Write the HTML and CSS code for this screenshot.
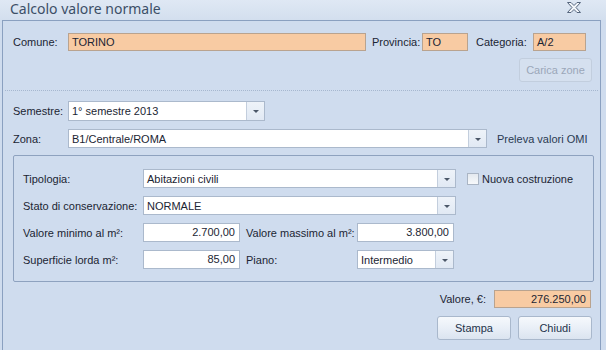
FILE: index.html
```html
<!DOCTYPE html>
<html lang="it">
<head>
  <meta charset="UTF-8">
  <title>Calcolo valore normale</title>
  <link rel="stylesheet" href="styles.css">
</head>
<body>

  <div class="titlebar">
    <span class="titolo">Calcolo valore normale</span>
    <span class="chiudi-x">
      <svg width="14" height="11" viewBox="0 0 14 11">
        <polygon points="0.5,0.5 4,0.5 7,3.5 10,0.5 13.5,0.5 9,5.5 13.5,10.5 10,10.5 7,7.5 4,10.5 0.5,10.5 5,5.5" fill="#f3f6fa" stroke="#56667e" stroke-width="1" stroke-linejoin="round"/>
      </svg>
    </span>
  </div>

  <div class="frame">
    <div class="riga">
      <label class="lbl-comune">Comune:</label>
      <div class="campo arancio w-comune">TORINO</div>
      <label class="lbl-prov">Provincia:</label>
      <div class="campo arancio w-prov">TO</div>
      <label class="lbl-cat">Categoria:</label>
      <div class="campo arancio w-cat">A/2</div>
    </div>

    <div class="riga destra riga-carica">
      <button class="btn disabilitato">Carica zone</button>
    </div>

    <div class="separatore"></div>

    <div class="riga riga-semestre">
      <label class="lbl-comune">Semestre:</label>
      <div class="combo w-semestre alta">
        <span class="testo">1° semestre 2013</span>
        <span class="freccia"></span>
      </div>
    </div>

    <div class="riga riga-zona">
      <label class="lbl-comune">Zona:</label>
      <div class="combo w-zona">
        <span class="testo">B1/Centrale/ROMA</span>
        <span class="freccia"></span>
      </div>
      <span class="link-omi">Preleva valori OMI</span>
    </div>

    <div class="gruppo">
      <div class="riga">
        <label class="lbl-g">Tipologia:</label>
        <div class="combo w-tipo">
          <span class="testo">Abitazioni civili</span>
          <span class="freccia"></span>
        </div>
        <span class="check"></span>
        <span class="check-testo">Nuova costruzione</span>
      </div>
      <div class="riga">
        <label class="lbl-g">Stato di conservazione:</label>
        <div class="combo w-tipo">
          <span class="testo">NORMALE</span>
          <span class="freccia"></span>
        </div>
      </div>
      <div class="riga">
        <label class="lbl-g">Valore minimo al m²:</label>
        <div class="campo num w-val">2.700,00</div>
        <label class="lbl-g2">Valore massimo al m²:</label>
        <div class="campo num w-val">3.800,00</div>
      </div>
      <div class="riga">
        <label class="lbl-g">Superficie lorda m²:</label>
        <div class="campo num w-val">85,00</div>
        <label class="lbl-g2">Piano:</label>
        <div class="combo w-val">
          <span class="testo">Intermedio</span>
          <span class="freccia"></span>
        </div>
      </div>
    </div>

    <div class="riga destra riga-valore">
      <label class="lbl-valore">Valore, €:</label>
      <div class="campo arancio num w-val">276.250,00</div>
    </div>

    <div class="riga destra riga-bottoni">
      <button class="btn">Stampa</button>
      <button class="btn">Chiudi</button>
    </div>
  </div>

</body>
</html>
```

FILE: styles.css
```css
body {
  margin: 0;
  background-color: #cfdcee;
  font-family: 'Liberation Sans', Arial, sans-serif;
  font-size: 11px;
  color: #1b2533;
  overflow: hidden;
}

.titlebar {
  height: 20px;
  display: flex;
  align-items: flex-start;
  justify-content: space-between;
  padding: 0 25px 0 10px;
  background: linear-gradient(#dfe8f4, #d3dfee);
}

.titolo {
  font-family: 'Noto Sans', 'Open Sans', sans-serif;
  font-size: 14px;
  color: #3c4f67;
  line-height: 18px;
}

.chiudi-x {
  display: flex;
  margin-top: 2px;
}

.frame {
  margin: 0 5px 0 2px;
  height: 330px;
  border: 1px solid #8aa0c0;
  border-bottom: none;
  padding: 12px 6px 0 10px;
  box-sizing: border-box;
}

.riga {
  display: flex;
  align-items: center;
}

.destra {
  justify-content: flex-end;
}

label {
  white-space: nowrap;
}

.lbl-comune { width: 55px; }
.lbl-prov { margin-left: 6px; width: 50px; }
.lbl-cat { margin-left: 8px; width: 57px; }

.campo {
  height: 18px;
  box-sizing: border-box;
  border: 1px solid #abb9cc;
  background-color: #fff;
  padding: 0 4px;
  line-height: 16px;
  white-space: nowrap;
}

.arancio {
  background-color: #f8cba3;
  border-color: #b9a38f;
  padding-left: 3px;
}

.num {
  text-align: right;
}

.w-comune { width: 298px; }
.w-prov { width: 46px; }
.w-cat { width: 53px; }
.w-semestre { width: 197px; }
.w-zona { width: 419px; }
.w-tipo { width: 313px; }
.w-val { width: 97px; }

.combo {
  height: 19px;
  box-sizing: border-box;
  border: 1px solid #abb9cc;
  background-color: #fff;
  display: flex;
  align-items: stretch;
}

.combo.alta {
  height: 20px;
}

.combo .testo {
  flex: 1;
  padding-left: 3px;
  display: flex;
  align-items: center;
  white-space: nowrap;
}

.combo .freccia {
  width: 17px;
  border-left: 1px solid #c3cedd;
  background: linear-gradient(#eef3f9, #e1e9f4);
  position: relative;
}

.combo .freccia::after {
  content: "";
  position: absolute;
  left: 6px;
  top: 50%;
  margin-top: -1px;
  border-left: 3px solid transparent;
  border-right: 3px solid transparent;
  border-top: 3px solid #4b5768;
}

.riga-carica {
  margin-top: 7px;
  padding-right: 2px;
}

.btn {
  width: 74px;
  height: 24px;
  font-family: 'Liberation Sans', Arial, sans-serif;
  font-size: 11px;
  color: #22324a;
  border: 1px solid #a9b8cc;
  border-radius: 3px;
  background: linear-gradient(#f6f9fc, #e9eff7 50%, #dbe4f0);
  padding: 0;
}

.btn.disabilitato {
  width: 73px;
  color: #9ba7b9;
  border-color: #c2cede;
  background: #d5e0ef;
}

.separatore {
  margin: 8px -4px 0 -8px;
  border-top: 1px dotted #a6b7cf;
}

.riga-semestre { margin-top: 10px; }
.riga-zona { margin-top: 8px; }

.link-omi {
  margin-left: 10px;
  color: #2a3a52;
  white-space: nowrap;
}

.gruppo {
  margin-top: 7px;
  border: 1px solid #8ea2bf;
  border-radius: 2px;
  padding: 13px 0 12px 9px;
  display: flex;
  flex-direction: column;
  gap: 8px;
}

.gruppo .riga {
  height: 19px;
}

.gruppo .campo {
  height: 19px;
  line-height: 17px;
}

.lbl-g { width: 120px; }
.lbl-g2 { width: 111px; margin-left: 6px; }

.check {
  width: 12px;
  height: 12px;
  box-sizing: border-box;
  margin-left: 11px;
  border: 1px solid #aab5c4;
  background: linear-gradient(#e4e9ef, #f7f9fb);
}

.check-testo {
  margin-left: 3px;
  white-space: nowrap;
}

.riga-valore {
  margin-top: 8px;
  padding-right: 3px;
}

.lbl-valore {
  margin-right: 8px;
}

.riga-bottoni {
  margin-top: 8px;
  gap: 7px;
  padding-right: 2px;
}
```
